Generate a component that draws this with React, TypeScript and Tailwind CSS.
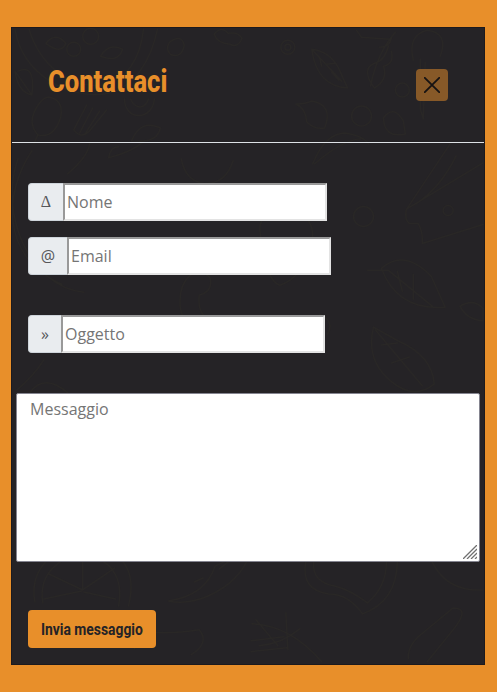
import React from "react";

function FoodPattern() {
  return (
    <svg
      className="pointer-events-none absolute inset-0 h-full w-full"
      viewBox="11 27 474 638"
      fill="none"
      stroke="#292726"
      strokeWidth="1.5"
      strokeLinecap="round"
      strokeLinejoin="round"
      aria-hidden="true"
    >
      <path d="M14 28C22 75 70 98 104 93C134 88 151 58 157 28M28 28C40 66 70 87 101 84C126 80 140 57 143 28" />
      <circle cx="73" cy="48" r="7" /><circle cx="90" cy="35" r="8" />
      <path d="M45 42q10-12 20 0q-4 12-20 0M100 55q8-14 22-7q-4 14-22 7" />
      <path d="M169 41q12-9 15 3q-3 14-14 9q-5-5-1-12M214 33q7-9 14-1q10-2 14 5q-4 10-12 6q-13-1-16-10" />
      <circle cx="288" cy="46" r="7" /><circle cx="288" cy="46" r="3" />
      <path d="M312 48q18 2 27 19l9 20q-31-2-36-39l30 32M320 57l2 8m4-2l10-1m-4 9l7 8" />
      <path d="M396 31q-18 20-25 54M392 37q-2 9-12 9m9-1q-4 15-14 17q-14 6 0 25q14-9 9-22q11-2 8-15M390 38l-28-2-5-7" />
      <path d="M414 59q-6-25 14-30q22 3 13 26M421 58v50l3 10 2-57" />
      <circle cx="403" cy="89" r="7" /><circle cx="362" cy="115" r="10" />
      <path d="M296 103q10 4 11 18q8 8 18 6q9-23-13-27q-6 3-16 3zM384 117q10-14 20 3l2 13q-21 5-22-16z" />
      <path d="M17 70q18-8 14 24q-14-3-17-24l17 24M48 96q15 3 12 20q-7 22-23 18q-12-13 1-31q5-7 10-7zM37 134l-4 9M86 104l-13 25q7 9 15 2l18-22M92 107l-13 25m20-22-14 22" />
      <path d="M124 98c0 22 28 22 30 0M130 98c5 11 15 10 18 0M131 140q9-22 29-13q-3 16-29 13M108 157q24-6 36-17m-26 6q-8 0-10 11" />
      <path d="M313 163q12-30 32-31q19 3 24 11M315 163q28-24 46-25M451 143L407 209q-2 10 3 14h9q5 9 4 20l61-19M408 208l76-46M417 203q25-17 40-48" />
      <circle cx="449" cy="210" r="5" /><circle cx="364" cy="216" r="10" />
      <path d="M382 268q23-20 50 8l14 31q-48 4-64-39zM368 270h21l44 36M398 271l5 20m11-17v25M461 306q13-8 23 2v13q-17-2-23-15M374 327q-8 33 17 54q24 20 44 3q-2-28-36-43zM376 330l47 56M382 345l16-2m-6 20 18-6" />
      <path d="M181 158q4 22 23 25q22 0 29-23M67 173q20-17 22-30M260 230q-2-18 27-18q27 0 26 26q-7 38-33 47q-15-5-20-55M190 275q14-6 20 3q3 13-11 17q-2 20 11 24q-28 10-30-12q-2-22 10-32M320 314q15 7 8 20" />
      <path d="M31 150C2 193 0 257 61 284M17 158C-2 211 27 286 83 292M16 390q16-13 27-30M29 393q14-20 38 0" />
      <path d="M34 603C28 570 54 545 83 549C121 546 137 571 128 607M42 604C37 574 60 556 83 557C111 559 123 579 118 607M82 557v34L48 575m34 16 32-22M81 592l-38 8m40-7 32 7" />
      <path d="M168 602q37-5 47-35q17-9 35-12q-10 28-42 42q-21 9-40 5M194 583l9-4m16-9 10-8M134 650q5-18 28-16q20 0 37-3q11 13-8 25" />
      <path d="M306 563q-5 28 23 32q20 0 34 20q34-12 35-52M314 563q-2 20 21 24q16 4 33 17q19-16 19-41M433 563q15 30 51 28" />
      <path d="M252 625q38 1 70 38M259 647q23-2 41-17M278 647l-22-26M288 651l-2-37M409 660q-1-15 16-27l29-24q18 0 0 22l-26 32M251 642l33-4m-33 15 36-4" />
    </svg>
  );
}

interface FieldProps {
  symbol: string;
  label: string;
  addonClass: string;
}

function Field({ symbol, label, addonClass }: FieldProps) {
  return (
    <div className="flex h-[38px]">
      <span
        className={`flex shrink-0 items-center justify-center rounded-l-[4px] border border-r-0 border-[#ced4da] bg-[#e9ecef] text-base text-[#56575a] ${addonClass}`}
      >
        {symbol}
      </span>
      <input
        type="text"
        aria-label={label}
        placeholder={label}
        className="h-[38px] w-[264px] rounded-none border-2 border-t-[#999] border-r-[#e3e3e3] border-b-[#e3e3e3] border-l-[#999] bg-white py-px pr-0.5 pl-[2px] text-base text-gray-800 outline-none placeholder:text-[#757575]"
      />
    </div>
  );
}

export default function App() {
  return (
    <main className="h-[692px] w-[497px] overflow-hidden bg-[#e88f2a] pt-[27px] pl-[11px] font-['Open_Sans',sans-serif]">
      <section className="relative h-[638px] w-[474px] border border-[#1d1a1d] bg-[#252326]">
        <FoodPattern />
        <header className="relative flex h-[115px] items-start justify-between border-b border-[#dee2e6] pr-9 pl-9">
          <h1 className="mt-[29px] w-[120px] origin-left scale-x-[0.80] font-[Roboto,sans-serif] text-[32px] leading-[48px] font-extrabold whitespace-nowrap text-[#e88f2a]">
            Contattaci
          </h1>
          <button
            type="button"
            aria-label="Chiudi"
            className="mt-[41px] flex h-8 w-8 items-center justify-center rounded-[4px] bg-[#875928]"
          >
            <svg className="h-4 w-4" viewBox="0 0 16 16" fill="none" stroke="#171313" strokeWidth="1.8" strokeLinecap="round">
              <path d="M.8.8l14.4 14.4M15.2.8L.8 15.2" />
            </svg>
          </button>
        </header>
        <form className="relative" onSubmit={(event) => event.preventDefault()}>
          <div className="flex flex-col pt-10 pl-4">
            <Field symbol="Δ" label="Nome" addonClass="w-[35px] font-['Liberation_Serif',serif]" />
            <div className="mt-4">
              <Field symbol="@" label="Email" addonClass="w-[39px]" />
            </div>
            <div className="mt-10">
              <Field symbol="»" label="Oggetto" addonClass="w-[33px]" />
            </div>
          </div>
          <div className="relative mt-10 ml-1 h-[169px] w-[464px]">
            <textarea
              aria-label="Messaggio"
              placeholder="Messaggio"
              className="block h-full w-full resize-none rounded-[2px] border border-[#858590] bg-white px-[13px] py-[3px] text-base leading-6 outline-none placeholder:text-[#757575]"
            />
            <svg className="absolute right-[3px] bottom-[3px] h-[14px] w-[14px]" viewBox="0 0 14 14" fill="none" stroke="#707070" strokeWidth="1.3">
              <path d="M0 14L14 0M4 14L14 4M8 14l6-6M12 14l2-2" />
            </svg>
          </div>
          <button type="submit" className="mt-12 ml-4 flex h-[38px] w-32 items-center rounded-[4px] bg-[#e88f2a] pl-[13px]">
            <span className="inline-block origin-left scale-x-[0.815] font-[Roboto,sans-serif] text-[17px] leading-6 font-bold whitespace-nowrap text-[#252326]">
              Invia messaggio
            </span>
          </button>
        </form>
      </section>
    </main>
  );
}
